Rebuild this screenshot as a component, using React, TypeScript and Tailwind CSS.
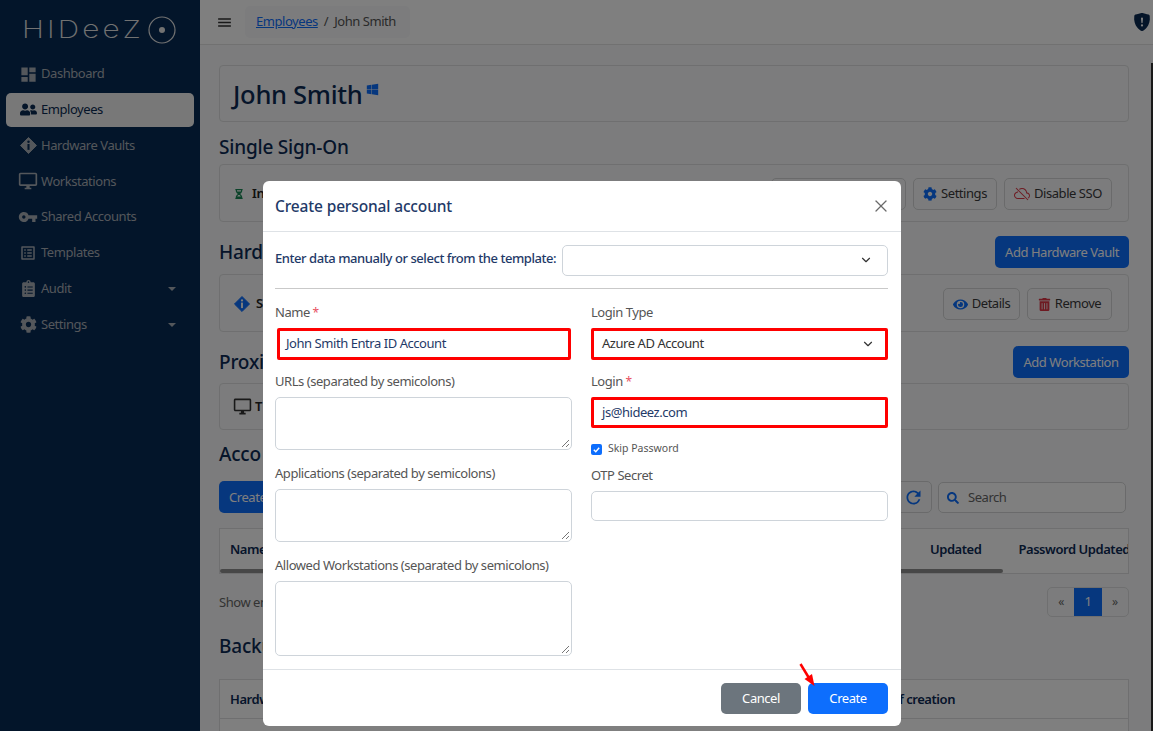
import React from 'react';
import { ChevronDown, X } from 'lucide-react';
import { BsCloudSlash, BsShieldFillExclamation } from 'react-icons/bs';
import {
  FaClipboardList,
  FaCog,
  FaEye,
  FaHourglassHalf,
  FaSearch,
  FaTrashAlt,
  FaUserFriends,
  FaWindows,
} from 'react-icons/fa';
import { MdDashboard, MdMenu, MdOutlineDesktopWindows, MdOutlineListAlt, MdRefresh, MdVpnKey } from 'react-icons/md';

const DiamondInfo = ({ size = 18, className = '' }: { size?: number; className?: string }) => (
  <svg width={size} height={size} viewBox="0 0 18 18" className={className}>
    <path d="M9 .5 17.5 9 9 17.5.5 9Z" fill="currentColor" stroke="currentColor" strokeLinejoin="round" />
    <circle cx="9" cy="5" r="1.3" fill="var(--cut)" />
    <rect x="7.9" y="7.4" width="2.2" height="6.2" fill="var(--cut)" />
  </svg>
);

const NavItem = ({ icon, label, active, caret }: { icon: React.ReactNode; label: string; active?: boolean; caret?: boolean }) => (
  <div
    className={`flex items-center h-[34px] mx-[6px] pl-[9px] pr-[18px] rounded-[5px] text-[13px] tracking-[-0.45px] mb-[1.8px] ${
      active ? 'bg-[#f1f1f1] text-[#0a2a52]' : 'text-[#a8aeb6]'
    }`}
  >
    <span className="w-[26px] flex justify-center shrink-0 [--cut:#062a54]">{icon}</span>
    <span>{label}</span>
    {caret && <span className="ml-auto border-x-[4px] border-x-transparent border-t-[4px] border-t-[#a8aeb6]" />}
  </div>
);

const Sidebar = () => (
  <aside className="w-[200px] shrink-0 h-full bg-[#062a54] pt-[16px]">
    <div className="flex items-center pl-[22px] h-[28px] text-[#e4e4e4]">
      <span className="w-[123px] origin-left scale-x-[1.24] text-[24px] leading-none font-extralight tracking-[2.5px] font-['Inter',sans-serif]">HIDeeZ</span>
      <svg width="28" height="28" viewBox="0 0 28 28" className="ml-[3px] shrink-0">
        <circle cx="14" cy="14" r="13" fill="none" stroke="currentColor" strokeWidth="1.2" />
        <circle cx="14" cy="14" r="3" fill="currentColor" />
      </svg>
    </div>
    <div className="mt-[13px] flex flex-col">
      <NavItem icon={<MdDashboard size={19} />} label="Dashboard" />
      <NavItem icon={<FaUserFriends size={17} />} label="Employees" active />
      <NavItem icon={<DiamondInfo size={17} className="text-[#a8aeb6]" />} label="Hardware Vaults" />
      <NavItem icon={<MdOutlineDesktopWindows size={20} />} label="Workstations" />
      <NavItem icon={<MdVpnKey size={20} />} label="Shared Accounts" />
      <NavItem icon={<MdOutlineListAlt size={18} />} label="Templates" />
      <NavItem icon={<FaClipboardList size={17} />} label="Audit" caret />
      <NavItem icon={<FaCog size={17} />} label="Settings" caret />
    </div>
  </aside>
);

const OutlineBtn = ({ icon, label, className = '' }: { icon?: React.ReactNode; label?: string; className?: string }) => (
  <div className={`h-[32px] flex items-center justify-center gap-[4px] border border-[#d4d5d6] rounded-[5px] text-[13px] text-[#3a3a3a] tracking-[-0.45px] pt-[1px] ${className}`}>
    {icon}
    {label}
  </div>
);

const PrimaryBtn = ({ label, className = '' }: { label: string; className?: string }) => (
  <div className={`h-[32px] flex items-center rounded-[5px] bg-[#0d6efd] text-white text-[13px] tracking-[-0.45px] pt-[1px] ${className}`}>{label}</div>
);

const Card = ({ children, className = '' }: { children?: React.ReactNode; className?: string }) => (
  <div className={`border border-[#dedfe0] rounded-[4px] bg-[#f8f9fa] ${className}`}>{children}</div>
);

const SectionTitle = ({ children }: { children: React.ReactNode }) => (
  <h2 className="text-[19px] leading-[24px] font-medium text-[#0c2a55] tracking-[-0.2px]">{children}</h2>
);

// Only what shows beside the modal is written out; the rest of these words is hidden in the reference.
const EmployeePage = () => (
  <main className="flex-1 min-w-0 h-full flex flex-col bg-[#f8f9fa]">
    <header className="h-[45px] shrink-0 bg-white border-b border-[#e2e2e2] flex items-center pl-[16px] pr-[2px]">
      <MdMenu size={17} className="text-[#333]" />
      <div className="ml-[12px] h-[32px] w-[165px] rounded-[5px] bg-[#f8f9fa] flex items-center pl-[11px] pb-[1px] text-[13px] tracking-[-0.45px] text-[#555]">
        <span className="text-[#0d6efd] underline">Employees</span>
        <span className="mx-[6px]">/</span>
        <span>John Smith</span>
      </div>
      <BsShieldFillExclamation size={18} className="ml-auto text-[#0a2a52]" />
    </header>
    <div className="flex-1 flex min-h-0 overflow-hidden">
      <div className="flex-1 min-w-0 pl-[19px] pr-[22px] pt-[20px] overflow-hidden">
        <Card className="h-[57px] flex items-center pl-[13px] pt-[1px]">
          <h1 className="text-[25.5px] font-medium text-[#0c2a55] tracking-[-0.3px]">John Smith</h1>
          <FaWindows size={13} className="ml-[4px] mb-[9px] text-[#0d6efd]" />
        </Card>

        <div className="mt-[13px] mb-[5px]"><SectionTitle>Single Sign-On</SectionTitle></div>
        <Card className="h-[58px] flex items-center pl-[14px] pr-[16px] pt-[1px]">
          <FaHourglassHalf size={10} className="text-[#198754]" />
          <span className="ml-[8px] text-[13px] font-semibold text-[#222] tracking-[-0.3px]">In</span>
          <div className="ml-auto flex gap-[7px]">
            <OutlineBtn className="w-[135px]" />
            <OutlineBtn icon={<FaCog size={14} className="text-[#0d6efd]" />} label="Settings" className="w-[84px]" />
            <OutlineBtn icon={<BsCloudSlash size={16} className="text-[#dc3545]" />} label="Disable SSO" className="w-[108px]" />
          </div>
        </Card>

        <div className="mt-[14px] mb-[6px] flex items-center justify-between">
          <SectionTitle>Hard</SectionTitle>
          <PrimaryBtn label="Add Hardware Vault" className="w-[134px] justify-center" />
        </div>
        <Card className="h-[58px] flex items-center pl-[14px] pr-[16px] pt-[1px] [--cut:#f8f9fa]">
          <DiamondInfo size={16} className="text-[#0d6efd]" />
          <span className="ml-[6px] text-[13px] font-semibold text-[#222] tracking-[-0.3px]">S</span>
          <div className="ml-auto flex gap-[7px]">
            <OutlineBtn icon={<FaEye size={15} className="text-[#0d6efd]" />} label="Details" className="w-[77px]" />
            <OutlineBtn icon={<FaTrashAlt size={13} className="text-[#dc3545]" />} label="Remove" className="w-[85px]" />
          </div>
        </Card>

        <div className="mt-[14px] mb-[5px] flex items-center justify-between">
          <SectionTitle>Proxi</SectionTitle>
          <PrimaryBtn label="Add Workstation" className="w-[116px] justify-center" />
        </div>
        <Card className="h-[47px] flex items-center pl-[13px]">
          <MdOutlineDesktopWindows size={19} className="text-[#333]" />
          <span className="ml-[3px] text-[13px] font-semibold text-[#222]">T</span>
        </Card>

        <div className="mt-[12px] mb-[15px]"><SectionTitle>Acco</SectionTitle></div>
        <div className="flex items-center">
          <PrimaryBtn label="Create" className="w-[100px] pl-[10px]" />
          <OutlineBtn icon={<MdRefresh size={21} className="text-[#0d6efd]" />} className="ml-auto w-[38px]" />
          <div className="ml-[6px] mr-[3px] w-[188px] h-[31px] border border-[#d4d5d6] rounded-[5px] bg-white flex items-center pl-[8px] pt-[1px] text-[13px] text-[#666] tracking-[-0.45px]">
            <FaSearch size={12} className="text-[#0d6efd]" />
            <span className="ml-[9px]">Search</span>
          </div>
        </div>

        <div className="mt-[15px] h-[46px] border border-[#dedfe0] bg-white relative overflow-hidden">
          <div className="h-[41px] pt-[1px] flex items-center text-[13px] font-semibold text-[#0c2a55] tracking-[-0.45px]">
            <span className="ml-[10px]">Name</span>
            <span className="ml-auto mr-[37px]">Updated</span>
            <span className="whitespace-nowrap mr-[-2px]">Password Updated</span>
          </div>
          <div className="absolute left-0 bottom-0 h-[4px] w-[783px] rounded-[2px] bg-[#8f8f8f]" />
        </div>

        <div className="mt-[13px] flex items-center justify-between h-[30px] text-[13px] text-[#666] tracking-[-0.45px]">
          <span className="pt-[2px]">Show en</span>
          <div className="flex w-[82px] h-[30px] border border-[#dedfe0] rounded-[5px] overflow-hidden text-[12px]">
            <span className="w-[27px] flex items-center justify-center">«</span>
            <span className="w-[28px] flex items-center justify-center bg-[#0d6efd] text-white text-[13px]">1</span>
            <span className="w-[27px] flex items-center justify-center">»</span>
          </div>
        </div>

        <div className="mt-[17px] mb-[21px]"><SectionTitle>Backu</SectionTitle></div>
        <div className="h-[80px] border border-[#dedfe0] bg-white text-[13px] font-semibold text-[#0c2a55] tracking-[-0.45px]">
          <div className="h-[39px] pt-[2px] flex items-center border-b border-[#dedfe0] pl-[10px] pr-[173px] justify-between">
            <span>Hardw</span>
            <span>f creation</span>
          </div>
        </div>
      </div>
      <div className="w-[2px] shrink-0 mt-[18px] bg-[#333]" />
    </div>
  </main>
);

const fieldBase = 'w-full border border-[#ced4da] rounded-[5px] bg-white block';
const redBox = 'border-[3px] border-[#ff0000] rounded-[2px] flex items-center text-[13px] tracking-[-0.45px]';

const Field = ({ label, required, children, className = '' }: { label: string; required?: boolean; children: React.ReactNode; className?: string }) => (
  <div className={className}>
    <div className="h-[20px] -mt-[1px] mb-[6px] text-[13px] leading-[20px] text-[#555] tracking-[-0.45px]">
      {label}
      {required && <span className="text-[#e8505f] text-[12px]"> *</span>}
    </div>
    {children}
  </div>
);

const TextArea = ({ height }: { height: string }) => (
  <div className={`${fieldBase} ${height} relative overflow-hidden`}>
    <svg width="10" height="10" viewBox="0 0 10 10" className="absolute right-[1px] bottom-[1px] text-[#777]">
      <path d="M2 9 9 2M6 9l3-3" stroke="currentColor" strokeWidth="1" fill="none" />
    </svg>
  </div>
);

const CreateAccountModal = () => (
  <div className="absolute inset-0 bg-black/50">
    <div className="absolute left-[263px] top-[181px] w-[638px] h-[545px] bg-white rounded-[6px] flex flex-col text-[#1f3a68] overflow-hidden">
      <div className="h-[51px] shrink-0 border-b border-[#dee2e6] flex items-center justify-between pl-[12px] pr-[10px]">
        <h3 className="text-[15.5px] font-medium text-[#1f3a68] tracking-[-0.15px] mt-[1px]">Create personal account</h3>
        <X size={20} strokeWidth={1.5} className="text-[#6a6a6a]" />
      </div>

      <div className="flex-1 min-h-0 px-[12px] pt-[12px]">
        <div className="flex items-center justify-between h-[32px] w-[613px]">
          <span className="whitespace-nowrap text-[13px] font-medium text-[#1f3a68] tracking-[-0.44px] -mt-[3px]">Enter data manually or select from the template:</span>
          <div className={`${fieldBase} !w-[326px] shrink-0 h-[31px] flex items-center justify-end pr-[14px]`}>
            <ChevronDown size={14} className="text-[#333]" />
          </div>
        </div>
        <div className="mt-[12px] border-t border-[#c9c9c9] w-[613px]" />

        <div className="mt-[14px] grid grid-cols-[297px_297px] gap-x-[19px]">
          <div>
            <Field label="Name" required>
              <div className={`${redBox} h-[32px] ml-[2px] w-[294px] pl-[6px] text-[#1f3a68]`}>John Smith Entra ID Account</div>
            </Field>
            <Field label="URLs (separated by semicolons)" className="mt-[12px]">
              <TextArea height="h-[53px]" />
            </Field>
            <Field label="Applications (separated by semicolons)" className="mt-[14px]">
              <TextArea height="h-[53px]" />
            </Field>
            <Field label="Allowed Workstations (separated by semicolons)" className="mt-[14px]">
              <TextArea height="h-[75px]" />
            </Field>
          </div>
          <div>
            <Field label="Login Type">
              <div className={`${redBox} h-[32px] pl-[8px] pr-[10px] justify-between text-[#333]`}>
                Azure AD Account
                <ChevronDown size={14} className="text-[#333]" />
              </div>
            </Field>
            <Field label="Login" required className="mt-[12px]">
              <div className={`${redBox} h-[31px] pl-[8px] text-[#1f3a68]`}>js@hideez.com</div>
            </Field>
            <div className="mt-[14px] flex items-center h-[14px]">
              <span className="w-[11px] h-[11px] rounded-[2px] bg-[#0d6efd] flex items-center justify-center">
                <svg width="9" height="9" viewBox="0 0 10 10">
                  <path d="M2 5.2 4.2 7.4 8 3" stroke="#fff" strokeWidth="1.6" fill="none" />
                </svg>
              </span>
              <span className="ml-[6px] text-[10.5px] text-[#555]">Skip Password</span>
            </div>
            <Field label="OTP Secret" className="mt-[10px]">
              <div className={`${fieldBase} h-[30px]`} />
            </Field>
          </div>
        </div>
      </div>

      <div className="h-[57px] shrink-0 border-t border-[#dee2e6] flex items-center justify-end gap-[7px] pr-[13px] pt-[1px]">
        <div className="w-[80px] h-[31px] rounded-[5px] bg-[#6c757d] text-white text-[13px] tracking-[-0.45px] flex items-center justify-center">Cancel</div>
        <div className="w-[80px] h-[31px] rounded-[5px] bg-[#0d6efd] text-white text-[13px] tracking-[-0.45px] flex items-center justify-center">Create</div>
      </div>
    </div>
    {/* red annotation arrow over the Create button */}
    <svg width="24" height="28" viewBox="0 0 24 28" className="absolute left-[797px] top-[662px]">
      <path d="M3.5 2 L12 16" stroke="#ff0000" strokeWidth="2.5" />
      <path d="M7.5 17 L15 12 L17.5 24 Z" fill="#ff0000" />
    </svg>
  </div>
);

export default function App() {
  return (
    <div className="relative w-[1153px] h-[731px] overflow-hidden flex font-['Noto_Sans',sans-serif]">
      <Sidebar />
      <EmployeePage />
      <CreateAccountModal />
    </div>
  );
}
